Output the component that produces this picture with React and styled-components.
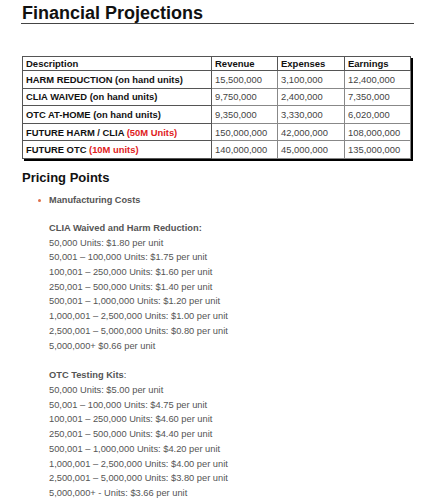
import React from 'react'
import styled, { createGlobalStyle } from 'styled-components'

const GlobalStyle = createGlobalStyle`
  body {
    margin: 0;
    background: #fff;
    font-family: "Liberation Sans", Arial, sans-serif;
  }
`

const rows = [
  { name: 'HARM REDUCTION (on hand units)', revenue: '15,500,000', expenses: '3,100,000', earnings: '12,400,000' },
  { name: 'CLIA WAIVED (on hand units)', revenue: '9,750,000', expenses: '2,400,000', earnings: '7,350,000' },
  { name: 'OTC AT-HOME (on hand units)', revenue: '9,350,000', expenses: '3,330,000', earnings: '6,020,000' },
  { name: 'FUTURE HARM / CLIA', note: '(50M Units)', revenue: '150,000,000', expenses: '42,000,000', earnings: '108,000,000' },
  { name: 'FUTURE OTC', note: '(10M units)', revenue: '140,000,000', expenses: '45,000,000', earnings: '135,000,000' },
]

const tiers = [
  {
    title: 'CLIA Waived and Harm Reduction:',
    colon: '',
    lines: [
      '50,000 Units: $1.80 per unit',
      '50,001 – 100,000 Units: $1.75 per unit',
      '100,001 – 250,000 Units: $1.60 per unit',
      '250,001 – 500,000 Units: $1.40 per unit',
      '500,001 – 1,000,000 Units: $1.20 per unit',
      '1,000,001 – 2,500,000 Units: $1.00 per unit',
      '2,500,001 – 5,000,000 Units: $0.80 per unit',
      '5,000,000+ $0.66 per unit',
    ],
  },
  {
    title: 'OTC Testing Kits',
    colon: ':',
    lines: [
      '50,000 Units: $5.00 per unit',
      '50,001 – 100,000 Units: $4.75 per unit',
      '100,001 – 250,000 Units: $4.60 per unit',
      '250,001 – 500,000 Units: $4.40 per unit',
      '500,001 – 1,000,000 Units: $4.20 per unit',
      '1,000,001 – 2,500,000 Units: $4.00 per unit',
      '2,500,001 – 5,000,000 Units: $3.80 per unit',
      '5,000,000+ - Units: $3.66 per unit',
    ],
  },
]

const App = () => {
  return (
    <>
      <GlobalStyle />
      <Page>
        <Title>Financial Projections</Title>

        <Table>
          <colgroup>
            <col style={{ width: 189 }} />
            <col style={{ width: 66 }} />
            <col style={{ width: 67 }} />
            <col style={{ width: 66 }} />
          </colgroup>
          <thead>
            <tr>
              <Th>Description</Th>
              <Th>Revenue</Th>
              <Th>Expenses</Th>
              <Th>Earnings</Th>
            </tr>
          </thead>
          <tbody>
            {rows.map((r) => (
              <tr key={r.name}>
                <Td $label>
                  {r.name}
                  {r.note && <Red> {r.note}</Red>}
                </Td>
                <Td>{r.revenue}</Td>
                <Td>{r.expenses}</Td>
                <Td>{r.earnings}</Td>
              </tr>
            ))}
          </tbody>
        </Table>

        <Heading>Pricing Points</Heading>

        <Bullets>
          <Bullet>Manufacturing Costs</Bullet>
        </Bullets>

        {tiers.map((t) => (
          <Tier key={t.title}>
            <TierTitle>
              {t.title}
              <span>{t.colon}</span>
            </TierTitle>
            {t.lines.map((l) => (
              <Line key={l}>{l}</Line>
            ))}
          </Tier>
        ))}
      </Page>
    </>
  )
}

const Page = styled.div`
  padding: 0 25px 0 21px;
`

const Title = styled.h1`
  margin: 0;
  padding: 3px 0 0 1px;
  font-size: 18px;
  line-height: 20px;
  font-weight: 700;
  color: #111;
  border-bottom: 1px solid #444;
`

const Table = styled.table`
  margin: 32px 0 0 1px;
  width: 388px;
  border-collapse: collapse;
  table-layout: fixed;
  box-shadow: 2px 2px 0 #000;
`

const Th = styled.th`
  height: 13px;
  padding: 0 3px;
  border: 1px solid #555;
  text-align: left;
  font-size: 9.5px;
  font-weight: 700;
  color: #111;
  white-space: nowrap;
`

const Td = styled.td`
  height: 16.6px;
  padding: 0 3px;
  border: 1px solid ${(p) => (p.$label ? '#555' : '#888')};
  font-size: 9.4px;
  font-weight: ${(p) => (p.$label ? 700 : 400)};
  color: ${(p) => (p.$label ? '#111' : '#444')};
  white-space: nowrap;
`

const Red = styled.span`
  color: #e0201c;
`

const Heading = styled.h2`
  margin: 11px 0 0 1px;
  font-size: 13px;
  line-height: 16px;
  font-weight: 700;
  color: #111;
`

const Bullets = styled.ul`
  margin: 8px 0 0;
  padding: 0 0 0 28px;
  list-style: none;
`

const Bullet = styled.li`
  position: relative;
  font-size: 9.2px;
  line-height: 12px;
  font-weight: 700;
  color: #555;

  &::before {
    content: '';
    position: absolute;
    left: -11px;
    top: 5px;
    width: 3px;
    height: 3px;
    border-radius: 50%;
    background: #e0704a;
  }
`

const Tier = styled.div`
  margin: 15px 0 0 28px;
`

const TierTitle = styled.div`
  font-size: 9.3px;
  line-height: 14.7px;
  font-weight: 700;
  color: #555;

  span {
    font-weight: 400;
  }
`

const Line = styled.div`
  font-size: 9.3px;
  line-height: 14.7px;
  color: #555;
`

export default App
